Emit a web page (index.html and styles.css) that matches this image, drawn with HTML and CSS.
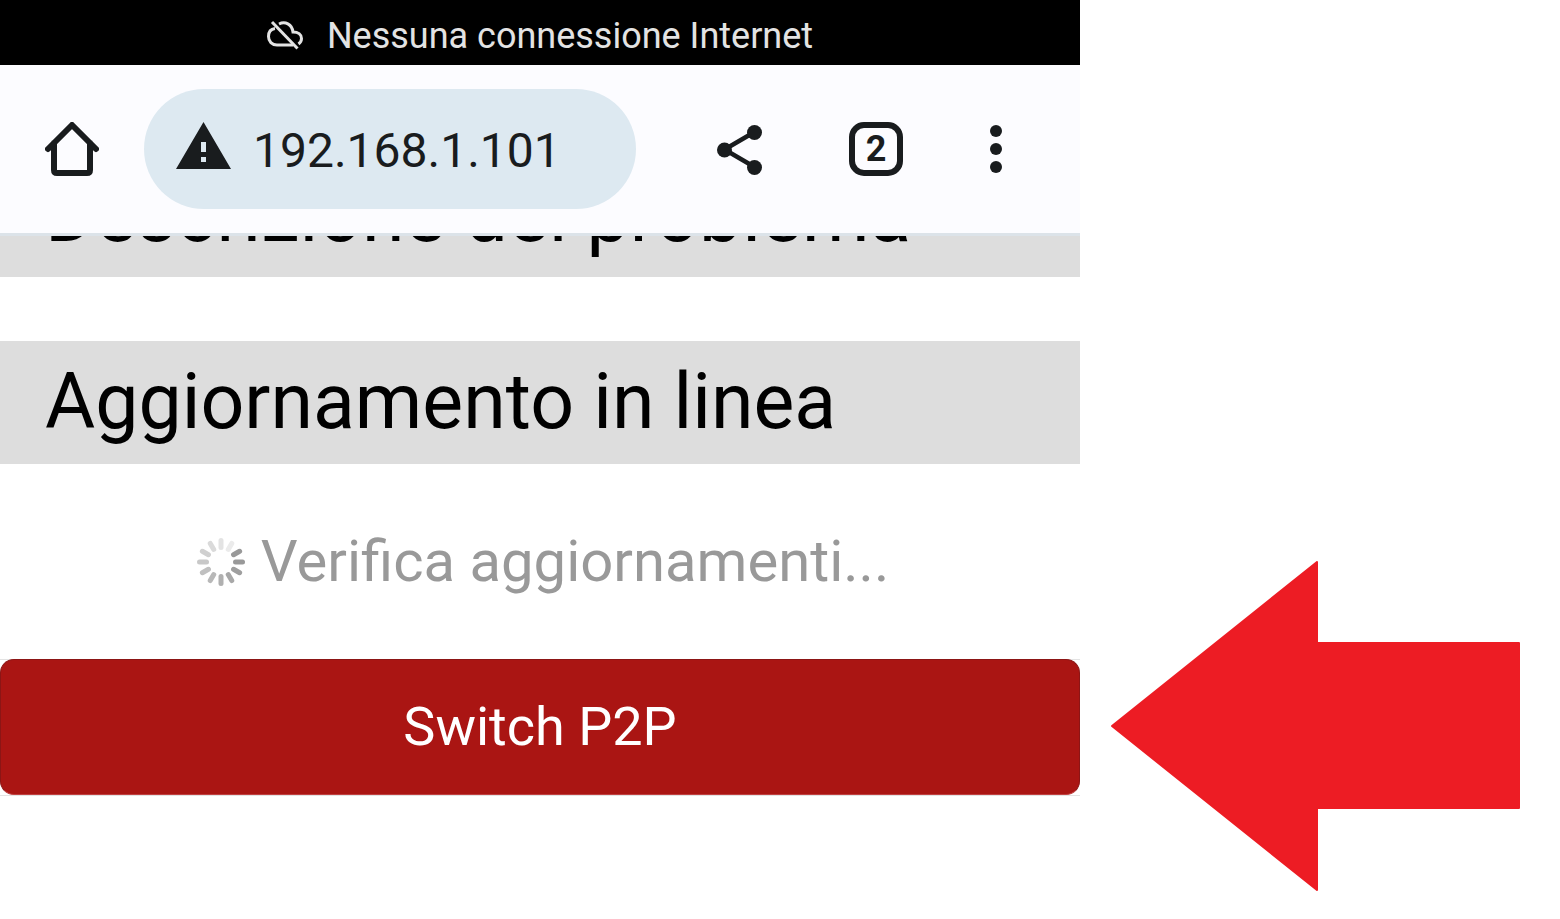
FILE: index.html
```html
<!DOCTYPE html>
<html lang="it">
<head>
    <meta charset="UTF-8">
    <meta name="viewport" content="width=device-width, initial-scale=1.0">
    <title>Aggiornamento in linea</title>
    <link rel="stylesheet" href="styles.css">
</head>
<body>
    <div class="phone">
        <div class="status-bar">
            <svg class="cloud-icon" viewBox="0 0 36 36" aria-hidden="true">
                <g fill="none" stroke="#e3e3e3" stroke-width="3">
                    <path d="M8 10.500C4 11 1.500 14 1.500 18.500C1.500 23.500 5 27 10 27H26" />
                    <path d="M12 6C18 3 25 6 26 14C31 14 34.500 16.500 34.500 20.500C34.500 22.500 33.500 24.500 31.500 26" />
                    <path d="M5 4L30.500 30.500" />
                </g>
            </svg>
            <span>Nessuna connessione Internet</span>
        </div>
        <header class="toolbar">
            <button class="home-button" aria-label="Home">
                <svg viewBox="0 0 54 54">
                    <path d="M3 27L27 3L51 27M9 21V48Q9 51 12 51H42Q45 51 45 48V21" fill="none" stroke="#191c1e" stroke-width="6" stroke-linecap="round" stroke-linejoin="round" />
                </svg>
            </button>
            <div class="address">
                <svg class="warning-icon" viewBox="0 0 55 55" aria-hidden="true">
                    <path fill="#191c1e" fill-rule="evenodd" d="M27.500 0L55 47H0ZM25 20V30H30V20ZM25 35V40H30V35Z" />
                </svg>
                <input type="text" value="192.168.1.101" aria-label="Indirizzo">
            </div>
            <button class="icon-button share-button" aria-label="Condividi">
                <svg viewBox="0 0 54 54">
                    <path d="M41.500 10L11.500 27.500L41.500 45" fill="none" stroke="#191c1e" stroke-width="4.500" />
                    <g fill="#191c1e">
                        <circle cx="41.500" cy="10.500" r="7.500" />
                        <circle cx="11.500" cy="28" r="7.500" />
                        <circle cx="41.500" cy="45.500" r="7.500" />
                    </g>
                </svg>
            </button>
            <button class="icon-button" aria-label="2 schede aperte">
                <span class="tab-count">2</span>
            </button>
            <button class="icon-button" aria-label="Menu">
                <svg viewBox="0 0 54 54">
                    <g fill="#191c1e">
                        <circle cx="27" cy="9" r="6" />
                        <circle cx="27" cy="27" r="6" />
                        <circle cx="27" cy="45" r="6" />
                    </g>
                </svg>
            </button>
        </header>
        <main class="page">
            <div class="scrolled">
                <h2>Descrizione del problema</h2>
            </div>
            <h2>Aggiornamento in linea</h2>
            <div class="checking">
                <svg class="spinner" viewBox="-24 -24 48 48" aria-hidden="true">
                    <g stroke-width="5" stroke-linecap="round">
                        <path stroke="#999" d="M14.500 0H21.500" />
                        <path stroke="#9f9f9f" d="M14.500 0H21.500" transform="rotate(30)" />
                        <path stroke="#a8a8a8" d="M14.500 0H21.500" transform="rotate(60)" />
                        <path stroke="#b0b0b0" d="M14.500 0H21.500" transform="rotate(90)" />
                        <path stroke="#b8b8b8" d="M14.500 0H21.500" transform="rotate(120)" />
                        <path stroke="#c0c0c0" d="M14.500 0H21.500" transform="rotate(150)" />
                        <path stroke="#c8c8c8" d="M14.500 0H21.500" transform="rotate(180)" />
                        <path stroke="#d0d0d0" d="M14.500 0H21.500" transform="rotate(210)" />
                        <path stroke="#dadada" d="M14.500 0H21.500" transform="rotate(240)" />
                        <path stroke="#e3e3e3" d="M14.500 0H21.500" transform="rotate(270)" />
                        <path stroke="#ebebeb" d="M14.500 0H21.500" transform="rotate(300)" />
                        <path stroke="#999" d="M14.500 0H21.500" transform="rotate(330)" />
                    </g>
                </svg>
                <span>Verifica aggiornamenti...</span>
            </div>
            <div class="switch-row">
                <button class="switch-button">Switch P2P</button>
            </div>
        </main>
    </div>
    <div class="pointer">
        <svg viewBox="0 0 409 330" role="img" aria-label="Freccia verso Switch P2P">
            <path d="M1 165L206 1V82H408V247H206V329Z" fill="#ed1c24" stroke="#ed1c24" stroke-width="2" stroke-linejoin="round" />
        </svg>
    </div>
</body>
</html>
```

FILE: styles.css
```css
body {
    margin: 0;
    min-height: 100vh;
    display: grid;
    grid-template-columns: 9fr 4fr;
    background-color: #fff;
    font-family: Roboto, Arial, sans-serif;
}
svg {
    display: block;
}
button {
    border: none;
    padding: 0;
    background: none;
    font-family: inherit;
    cursor: pointer;
}
.phone {
    min-width: 0;
}
.status-bar {
    display: flex;
    justify-content: center;
    align-items: center;
    gap: 24px;
    padding: 8px 0 1px;
    background-color: #000;
    color: #e3e3e3;
    font-size: 36px;
    line-height: 56px;
}
.cloud-icon {
    width: 36px;
    height: 36px;
}
.toolbar {
    display: flex;
    align-items: center;
    padding: 24px 24px 24px 45px;
    background-color: #fcfcff;
    border-bottom: 3px solid #dce3e9;
}
.home-button svg,
.icon-button svg {
    width: 54px;
    height: 54px;
}
.address {
    flex: 1;
    min-width: 0;
    display: flex;
    align-items: center;
    gap: 22px;
    height: 120px;
    margin-left: 45px;
    padding: 0 32px;
    box-sizing: border-box;
    background-color: #dde9f1;
    border-radius: 60px;
}
.warning-icon {
    flex: none;
    width: 55px;
    height: 55px;
}
.address input {
    flex: 1;
    min-width: 0;
    padding: 2px 0 0;
    border: none;
    outline: none;
    background: none;
    color: #191c1e;
    font-family: inherit;
    font-size: 48px;
}
.icon-button {
    display: flex;
    justify-content: center;
    width: 120px;
}
.share-button {
    margin: 0 16px 0 44px;
}
.tab-count {
    width: 54px;
    height: 54px;
    box-sizing: border-box;
    border: 6px solid #191c1e;
    border-radius: 15px;
    color: #191c1e;
    font-size: 36px;
    font-weight: 700;
    line-height: 42px;
}
/* heading partly hidden under the toolbar */
.scrolled {
    display: flex;
    align-items: flex-end;
    height: 41px;
    margin-bottom: 64px;
    overflow: hidden;
}
h2 {
    flex: 1;
    margin: 0;
    padding: 16px 45px;
    background-color: #ddd;
    color: #000;
    font-size: 77px;
    font-weight: 400;
    line-height: 91px;
}
.checking {
    display: flex;
    justify-content: center;
    align-items: center;
    gap: 16px;
    padding: 64px 0 64px 6px;
    color: #999;
    font-size: 58px;
    line-height: 67px;
}
.spinner {
    width: 48px;
    height: 48px;
}
.switch-row {
    border-bottom: 1px solid #e3e3e3;
    box-shadow: inset 0 1px #e3e3e3;
}
.switch-button {
    display: block;
    width: 100%;
    border: 1px solid #8c1515;
    border-bottom-color: #c04040;
    border-radius: 14px;
    background-color: #aa1513;
    color: #fff;
    font-size: 54px;
    line-height: 134px;
}
.pointer {
    display: flex;
    align-items: flex-end;
    padding: 0 40px 28px 31px;
}
.pointer svg {
    width: 100%;
}
```
